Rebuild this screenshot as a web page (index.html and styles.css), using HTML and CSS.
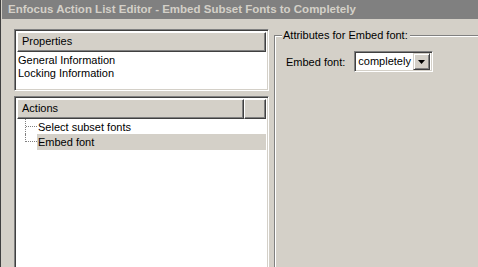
FILE: index.html
```html
<!DOCTYPE html>
<html>
    <head>
        <meta charset="utf-8">
        <title>Enfocus Action List Editor</title>
        <link rel="stylesheet" href="styles.css">
    </head>
    <body>
        <header class="titlebar">Enfocus Action List Editor - Embed Subset Fonts to Completely</header>

        <div class="content">
            <div class="left">
                <section class="box props">
                    <div class="head"><span class="cell full">Properties</span></div>
                    <ul class="list">
                        <li>General Information</li>
                        <li>Locking Information</li>
                    </ul>
                </section>

                <section class="box actions">
                    <div class="head">
                        <span class="cell wide">Actions</span>
                        <span class="cell narrow"></span>
                    </div>
                    <ul class="tree">
                        <li><i class="branch"></i><span>Select subset fonts</span></li>
                        <li class="selected"><i class="branch last"></i><span>Embed font</span></li>
                    </ul>
                </section>
            </div>

            <fieldset class="attrs">
                <legend>Attributes for Embed font:</legend>
                <div class="field">
                    <label>Embed font:</label>
                    <div class="combo">
                        <span class="value">completely</span>
                        <span class="drop"><svg width="7" height="4" viewBox="0 0 7 4"><path d="M0 0h7L3.5 4z" fill="#000"/></svg></span>
                    </div>
                </div>
            </fieldset>
        </div>
    </body>
</html>
```

FILE: styles.css
```css
html { overflow: hidden; height: 267px; }

body {
    margin: 0;
    height: 267px;
    overflow: hidden;
    background: #D4D0C8;
    color: #000;
    font-family: "Liberation Sans", Arial, sans-serif;
    font-size: 11px;
    border-left: 1px solid #404040;
    box-shadow: inset 1px 0 0 #D4D0C8;
}

.titlebar {
    height: 19px;
    line-height: 18px;
    margin-left: 1px;
    padding-left: 6px;
    background: #808080;
    color: #D4D0C8;
    font-weight: bold;
    font-size: 11.5px;
    white-space: nowrap;
}

.content {
    display: flex;
    gap: 5px;
    height: 238px;
    overflow: hidden;
    padding: 10px 0 0 13px;
}

.left {
    width: 255px;
    display: flex;
    flex-direction: column;
    gap: 5px;
}

.box {
    background: #fff;
    border: 1px solid;
    border-color: #808080 #fff #fff #808080;
    box-shadow: inset 1px 1px 0 #404040, inset -1px -1px 0 #D4D0C8;
    padding: 2px;
}
.props { height: 56px; flex: none; }
.actions { height: 200px; flex: none; }

.head {
    display: flex;
    height: 20px;
}
.cell {
    box-sizing: border-box;
    height: 20px;
    line-height: 17px;
    padding-left: 4px;
    background: #D4D0C8;
    border: 1px solid;
    border-color: #fff #404040 #404040 #fff;
    box-shadow: inset -1px -1px 0 #808080;
}
.full { flex: 1; }
.wide { flex: 1; }
.narrow { width: 22px; }

ul { list-style: none; margin: 0; padding: 0; }

.list li {
    line-height: 13px;
    padding-left: 1px;
}
.list { padding-top: 2px; }

.tree li {
    position: relative;
    display: flex;
    align-items: center;
    height: 16px;
    padding-left: 20px;
}
.tree li span { padding-left: 1px; flex: 1; line-height: 16px; }
.tree li.selected span { background: #D4D0C8; }
.tree li:first-child { height: 15px; }

.branch {
    position: absolute;
    left: 8px;
    top: 0;
    width: 11px;
    height: 100%;
    border-left: 1px dotted #808080;
}
.branch::after {
    content: "";
    position: absolute;
    left: 0;
    top: 7px;
    width: 11px;
    border-top: 1px dotted #808080;
}
.branch.last { height: 8px; }

.attrs {
    flex: 1;
    margin: 0;
    padding: 10px 0 0 11px;
    height: 235px;
    border: 1px solid #808080;
    border-right: none;
    box-shadow: inset 1px 1px 0 #fff;
}
.attrs legend {
    padding: 0 2px 0 1px;
    margin-left: -4px;
    background: #D4D0C8;
    line-height: 12px;
}

.field {
    display: flex;
    align-items: center;
    gap: 9px;
}

.combo {
    display: flex;
    width: 73px;
    height: 17px;
    background: #fff;
    border: 1px solid;
    border-color: #808080 #fff #fff #808080;
    box-shadow: inset 1px 1px 0 #404040, inset -1px -1px 0 #D4D0C8;
    padding: 1px 2px 1px 2px;
    box-sizing: content-box;
}
.value {
    flex: 1;
    line-height: 17px;
    padding-left: 1px;
}
.drop {
    box-sizing: border-box;
    width: 17px;
    height: 17px;
    display: flex;
    align-items: center;
    justify-content: center;
    background: #D4D0C8;
    border: 1px solid;
    border-color: #D4D0C8 #404040 #404040 #D4D0C8;
    box-shadow: inset 1px 1px 0 #fff, inset -1px -1px 0 #808080;
}
```
